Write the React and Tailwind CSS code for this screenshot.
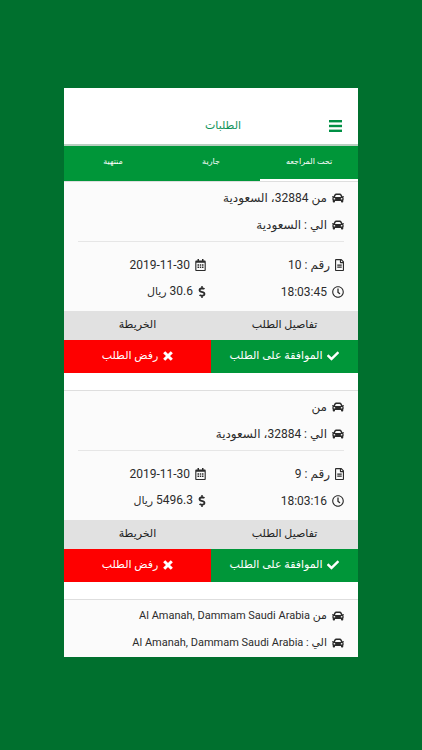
import { useState } from 'react';
import {
    FaCar,
    FaCheck,
    FaDollarSign,
    FaRegCalendarAlt,
    FaRegClock,
    FaRegFileAlt,
} from 'react-icons/fa';

const TABS = ['تحت المراجعه', 'جارية', 'منتهية'];

const ORDERS = [
    {
        id: '10',
        from: 'من 32884، السعودية',
        to: 'الي : السعودية',
        date: '2019-11-30',
        time: '18:03:45',
        price: '30.6',
    },
    {
        id: '9',
        from: 'من',
        to: 'الي : 32884، السعودية',
        date: '2019-11-30',
        time: '18:03:16',
        price: '5496.3',
    },
    {
        id: '8',
        from: 'من Al Amanah, Dammam Saudi Arabia',
        to: 'الي : Al Amanah, Dammam Saudi Arabia',
        small: true,
    },
];

function Row({ icon: Icon, iconWidth = 'w-3', small, children }) {
    return (
        <p className={`flex h-[27px] items-center gap-[5px] whitespace-nowrap ${small ? 'text-[11px]' : ''}`}>
            <Icon className={`h-3 shrink-0 ${iconWidth}`} />
            <span>{children}</span>
        </p>
    );
}

function CrossIcon() {
    return (
        <svg viewBox="0 0 10 10" className="size-[10px] shrink-0" fill="none" stroke="currentColor" strokeWidth="3">
            <path d="M1.2 1.2 8.8 8.8M8.8 1.2 1.2 8.8" />
        </svg>
    );
}

function OrderCard({ order }) {
    return (
        <article className="border-t border-[#dedede] bg-[#fbfbfb] text-[#2b2b2b]">
            <div className="px-[14px] pt-[2px]">
                <Row icon={FaCar} small={order.small}>{order.from}</Row>
                <Row icon={FaCar} small={order.small}>{order.to}</Row>
            </div>

            {order.date && (
                <>
                    <hr className="mx-[14px] mt-[3px] mb-[9px] border-[#e6e6e6]" />
                    <div className="grid grid-cols-2 pb-[6px]">
                        <div className="pr-[14px]">
                            <Row icon={FaRegFileAlt} iconWidth="w-[9px]">رقم : {order.id}</Row>
                            <Row icon={FaRegClock}>{order.time}</Row>
                        </div>
                        <div className="pr-[5px]">
                            <Row icon={FaRegCalendarAlt} iconWidth="w-[11px]"><bdi>{order.date}</bdi></Row>
                            <Row icon={FaDollarSign} iconWidth="w-[8px]">
                                {order.price} <span className="text-[11px]">ريال</span>
                            </Row>
                        </div>
                    </div>
                    <div className="grid h-[29px] grid-cols-2 bg-[#e1e1e1] text-[11px] text-[#222]">
                        <button type="button" className="pb-[2px]">تفاصيل الطلب</button>
                        <button type="button" className="pb-[2px]">الخريطة</button>
                    </div>
                    <div className="grid h-[33px] grid-cols-2 text-[11px] text-white">
                        <button type="button" className="flex items-center justify-center gap-[5px] bg-[#009639] pb-[2px]">
                            <FaCheck className="size-3 shrink-0" />
                            الموافقة على الطلب
                        </button>
                        <button type="button" className="flex items-center justify-center gap-[5px] bg-[#fe0000] pb-[2px]">
                            <CrossIcon />
                            رفض الطلب
                        </button>
                    </div>
                    <div className="h-[17px] bg-white" />
                </>
            )}
        </article>
    );
}

export default function App() {
    const [active, setActive] = useState(0);

    return (
        <div dir="rtl" className="min-h-screen bg-[#00702e] px-16 pt-[88px] pb-[93px] font-['Roboto','DejaVu_Sans',sans-serif] text-[12px] leading-4">
            <main className="bg-[#fbfbfb] pb-px">
                <header className="grid h-14 grid-cols-[1fr_auto_1fr] items-center bg-white pt-[19px] pr-4 pl-10">
                    <button type="button" aria-label="القائمة" className="justify-self-start">
                        <svg viewBox="0 0 13 12" className="h-3 w-[13px] fill-[#009045]">
                            <rect width="13" height="2.4" />
                            <rect y="4.8" width="13" height="2.4" />
                            <rect y="9.6" width="13" height="2.4" />
                        </svg>
                    </button>
                    <h1 className="text-[11px] text-[#10935a]">الطلبات</h1>
                </header>

                <nav className="grid h-[37px] grid-cols-3 border-t-2 border-[#b9cfc1] bg-[#009639] text-[8px] text-white">
                    {TABS.map((tab, i) => (
                        <button
                            key={tab}
                            type="button"
                            onClick={() => setActive(i)}
                            className={i === active ? 'border-b-2 border-white pb-[2px]' : 'border-b-2 border-transparent pb-[2px]'}
                        >
                            {tab}
                        </button>
                    ))}
                </nav>

                {ORDERS.map((order) => (
                    <OrderCard key={order.id} order={order} />
                ))}
            </main>
        </div>
    );
}
